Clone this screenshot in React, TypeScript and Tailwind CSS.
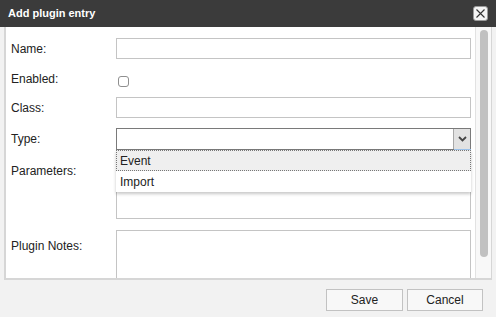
import React from "react";

export default function App() {
  return (
    <div className="w-[496px] h-[317px] bg-[#f2f2f2] flex flex-col font-['Liberation_Sans',Arial,sans-serif] text-[12px] text-[#222] overflow-hidden">
      <div className="h-[27px] shrink-0 bg-[#3b3b3b] flex items-center justify-between pl-[8px] pr-[8px]">
        <span className="text-white font-bold text-[11px]">Add plugin entry</span>
        <div className="w-[15px] h-[15px] bg-[#f4f4f4] rounded-[3px] border border-[#9a9a9a] flex items-center justify-center">
          <svg width="11" height="11" viewBox="0 0 11 11">
            <path d="M1.5 1.5 L9.5 9.5 M9.5 1.5 L1.5 9.5" stroke="#333" strokeWidth="1.1" fill="none" />
          </svg>
        </div>
      </div>

      <div className="mx-[4px] h-[253px] shrink-0 bg-white border-l-2 border-r border-b-2 border-[#d6d6d6] flex overflow-hidden">
        <div className="flex-1 flex flex-col pt-[11px] pl-[5px] pr-[4px] overflow-hidden">
          <div className="flex items-center h-[21px] shrink-0">
            <label className="w-[105px] shrink-0">Name:</label>
            <div className="flex-1 h-full border border-[#c4c4c4]" />
          </div>

          <div className="flex items-center h-[20px] mt-[11px] shrink-0">
            <label className="w-[105px] shrink-0 mb-[3px]">Enabled:</label>
            <div className="ml-[2px] mt-[2px] w-[11px] h-[11px] border border-[#8f8f8f] rounded-[3px] bg-white" />
          </div>

          <div className="flex items-center h-[21px] mt-[7px] shrink-0">
            <label className="w-[105px] shrink-0">Class:</label>
            <div className="flex-1 h-full border border-[#c4c4c4]" />
          </div>

          <div className="flex items-center h-[22px] mt-[10px] relative z-10 shrink-0">
            <label className="w-[105px] shrink-0">Type:</label>
            <div className="flex-1 h-full relative">
              <div className="h-full border border-[#7a7a7a] flex">
                <div className="ml-auto w-[17px] h-full bg-[#e2e2e2] border-l border-[#a8a8a8] flex items-center justify-center">
                  <svg width="9" height="6" viewBox="0 0 9 6">
                    <path d="M1 1 L4.5 4.5 L8 1" stroke="#444" strokeWidth="1.8" fill="none" />
                  </svg>
                </div>
              </div>
              <div className="absolute right-0 bottom-[-1px] w-[17px] h-[2px] bg-[#9cc3ec]" />
              <div className="absolute left-0 right-0 top-full bg-white shadow-[0px_2px_3px_rgba(0,0,0,0.22)] flex flex-col">
                <div className="h-[21px] bg-[#efefef] border border-dotted border-[#777] pl-[3px] flex items-center">Event</div>
                <div className="h-[21px] pl-[4px] flex items-center">Import</div>
              </div>
            </div>
          </div>

          <div className="flex items-start h-[60px] mt-[9px] shrink-0">
            <label className="w-[105px] shrink-0 pt-[3px]">Parameters:</label>
            <div className="flex-1 h-full border border-[#c4c4c4]" />
          </div>

          <div className="flex items-start h-[70px] mt-[11px] shrink-0">
            <label className="w-[105px] shrink-0 pt-[7px]">Plugin Notes:</label>
            <div className="flex-1 h-full border border-[#c4c4c4]" />
          </div>
        </div>

        <div className="w-[16px] shrink-0 bg-[#f8f8f8] border-l border-[#e2e2e2] flex justify-center pt-[3px]">
          <div className="w-[8px] h-[227px] rounded-full bg-[#c1c1c1]" />
        </div>
      </div>

      <div className="flex-1 flex justify-end items-start pt-[9px] pr-[13px] gap-[4px]">
        <button className="w-[77px] h-[22px] border border-[#c2c2c2] bg-[#f8f8f8] text-[12px] text-[#222]">Save</button>
        <button className="w-[76px] h-[22px] border border-[#c2c2c2] bg-[#f8f8f8] text-[12px] text-[#222]">Cancel</button>
      </div>
    </div>
  );
}
